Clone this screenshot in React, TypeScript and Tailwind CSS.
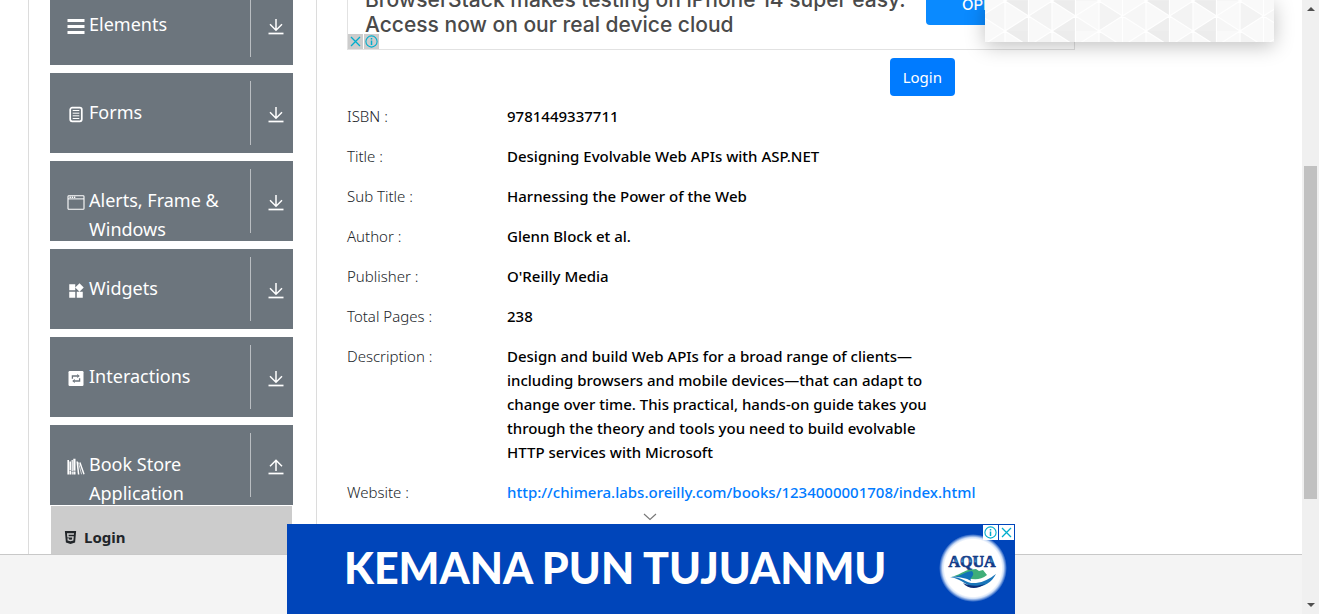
import React from "react";
import { MdWidgets } from "react-icons/md";
import { FaHtml5 } from "react-icons/fa";

function MenuIcon() {
  return (
    <svg viewBox="0 0 18 18" className="size-[18px]" fill="currentColor">
      <rect x="0.5" y="1" width="17" height="3" />
      <rect x="0.5" y="7" width="17" height="3" />
      <rect x="0.5" y="13" width="17" height="3" />
    </svg>
  );
}

function FormIcon() {
  return (
    <svg viewBox="0 0 18 18" className="size-[18px]" fill="none" stroke="currentColor">
      <rect x="3.2" y="1.7" width="11.6" height="13.6" rx="2" strokeWidth="1.7" />
      <path d="M5.7 4.5h6.6M5.7 7.2h6.6M5.7 9.8h6.6M5.7 12.5h6.6" strokeWidth="1" />
    </svg>
  );
}

function WindowIcon() {
  return (
    <svg viewBox="0 0 18 18" className="size-[18px]" fill="none" stroke="currentColor">
      <rect x="1" y="1.7" width="16" height="13.6" rx="0.8" strokeWidth="1.1" />
      <path d="M1 4.9h16" strokeWidth="1" />
      <path d="M2.5 3.3h6" strokeWidth="1.4" strokeDasharray="1.4 0.8" />
    </svg>
  );
}

function RepeatIcon() {
  return (
    <svg viewBox="0 0 18 18" className="size-[18px]" fill="none">
      <rect x="1.5" y="1" width="15" height="15" rx="1.2" fill="currentColor" />
      <path d="M5.4 8.8V6h5M12.6 8.2V11h-5" stroke="#6c757d" strokeWidth="1.3" />
      <path d="M10.2 3.9 12.8 6l-2.6 2.1zM7.8 8.9 5.2 11l2.6 2.1z" fill="#6c757d" />
    </svg>
  );
}

function BooksIcon() {
  return (
    <svg viewBox="0 0 18 18" className="size-[18px]" fill="none" stroke="currentColor">
      <path d="M1.2 2v14.5" strokeWidth="1.6" />
      <path d="M3.2 3.4v13.1" strokeWidth="1.6" strokeDasharray="9 0.6" />
      <path d="M5.2 2v14.5" strokeWidth="1.2" strokeDasharray="11 0.6" />
      <path d="M7.4 0.8v15.7" strokeWidth="2.2" strokeDasharray="12 0.6" />
      <path d="M10.2 3.5l1.4 13" strokeWidth="1.5" />
      <path d="M12.9 4.6 17 16.3" strokeWidth="1.4" />
      <path d="M11.4 4.4 14.6 16.3" strokeWidth="0.7" />
    </svg>
  );
}

function ArrowIcon({ up }: { up?: boolean }) {
  return (
    <svg viewBox="0 0 18 18" className="size-[18px]" fill="none" stroke="currentColor" strokeWidth="1.5">
      {up ? <path d="M9 13V2.2M3 8.2l6-6 6 6" /> : <path d="M9 1v11M3 6.2l6 6 6-6" />}
      <path d="M1.5 15.5h15" strokeWidth="1.7" />
    </svg>
  );
}

function CloseIcon() {
  return (
    <svg viewBox="0 0 15 15" className="size-[15px]" fill="none" stroke="#00aecd" strokeWidth="1.3">
      <path d="M3 3l9 9M12 3l-9 9" />
    </svg>
  );
}

function InfoIcon() {
  return (
    <svg viewBox="0 0 15 15" className="size-[15px]" fill="none" stroke="#00aecd">
      <circle cx="7.5" cy="7.5" r="5.6" strokeWidth="1.1" />
      <path d="M7.5 6.4v4.6M7.5 4v1.4" strokeWidth="1.5" />
    </svg>
  );
}

const menu = [
  { label: "Elements", icon: <MenuIcon /> },
  { label: "Forms", icon: <FormIcon /> },
  { label: "Alerts, Frame & Windows", icon: <WindowIcon /> },
  { label: "Widgets", icon: <MdWidgets className="size-[18px]" /> },
  { label: "Interactions", icon: <RepeatIcon /> },
  { label: "Book Store Application", icon: <BooksIcon />, open: true },
];

const details = [
  ["ISBN :", "9781449337711"],
  ["Title :", "Designing Evolvable Web APIs with ASP.NET"],
  ["Sub Title :", "Harnessing the Power of the Web"],
  ["Author :", "Glenn Block et al."],
  ["Publisher :", "O'Reilly Media"],
  ["Total Pages :", "238"],
  [
    "Description :",
    "Design and build Web APIs for a broad range of clients—including browsers and mobile devices—that can adapt to change over time. This practical, hands-on guide takes you through the theory and tools you need to build evolvable HTTP services with Microsoft",
  ],
];

function Sidebar() {
  return (
    <nav className="w-[289px] shrink-0 border-x border-[#dcdcdc] pr-[23px] pl-[21px]">
      <div className="-mt-[15px] flex flex-col gap-2">
        {menu.map((m) => (
          <div key={m.label}>
            <button
              type="button"
              className="flex h-20 w-full overflow-hidden bg-[#6c757d] py-2 pl-[17px] text-left text-white"
            >
              <span className="flex flex-1 items-start gap-1 pt-[17px]">
                <span className="pt-2">{m.icon}</span>
                <span className="w-[140px] text-[18px] leading-[29px]">{m.label}</span>
              </span>
              <span className="flex h-16 w-[43px] items-center justify-center border-l border-[#b9bdc1] pt-1 pl-2">
                <ArrowIcon up={m.open} />
              </span>
            </button>
            {m.open && (
              <a
                href="#login"
                className="mx-px mt-px flex h-[62px] items-center gap-[6px] bg-[#ccc] pl-3 text-[15px] font-bold text-[#212529]"
              >
                <FaHtml5 className="size-[15px]" />
                Login
              </a>
            )}
          </div>
        ))}
      </div>
    </nav>
  );
}

function TopAd() {
  return (
    <section className="-mt-10 flex h-[90px] w-[728px] flex-col justify-end border border-[#e2e2e2] bg-white">
      <div className="relative flex h-full justify-between pl-[17px]">
        <p className="pt-[26px] text-[21px] leading-[25px] font-medium whitespace-nowrap text-[#4a4a4a] font-['Inter',sans-serif]">
          BrowserStack makes testing on iPhone 14 super easy.
          <br />
          Access now on our real device cloud
        </p>
        <a
          href="#open"
          className="mt-5 mr-[30px] flex h-[44px] w-[118px] shrink-0 items-end rounded bg-[#0a8aff] pb-[9px] pl-9 text-[15px] font-medium text-white font-['Inter',sans-serif]"
        >
          OPEN
        </a>
        <div className="absolute bottom-0 left-0 flex gap-px">
          <button type="button" aria-label="Close ad" className="bg-[#ccc]">
            <CloseIcon />
          </button>
          <button type="button" aria-label="Ad choices" className="bg-[#ccc]">
            <InfoIcon />
          </button>
        </div>
      </div>
    </section>
  );
}

function Popup() {
  return (
    <aside className="absolute top-0 right-[28px] h-[42px] w-[289px] bg-[#f8f8f8] shadow-[0_4px_20px_rgba(0,0,0,0.25)]">
      <svg viewBox="0 0 289 42" className="h-full w-full">
        <defs>
          <pattern id="tri" width="141" height="30" patternUnits="userSpaceOnUse" patternTransform="translate(20 1)">
            <rect width="141" height="30" fill="#f9f9f9" />
            <path d="M0 0h23.5v15zM47 0h23.5v15z" fill="#ececec" />
            <path d="M0 30h23.5v-15zM47 30h23.5v-15z" fill="#eeeeee" />
            <path d="M23.5 15 47 0v30zM94 0v30l23.5-15z" fill="#f3f3f3" />
            <path d="M70.500 15 94 30H70.500zM141 0v30l-23.500-15z" fill="#f6f6f6" />
            <path
              d="M0 0v30M23.500 0v30M47 0v30M70.500 0v30M94 0v30M117.500 0v30M141 0v30M0 0l47 30L94 0l47 30M0 30 47 0l47 30 47-30"
              stroke="#fff"
              strokeWidth="1.2"
              fill="none"
            />
          </pattern>
        </defs>
        <rect width="289" height="42" fill="url(#tri)" />
      </svg>
    </aside>
  );
}

function AquaLogo() {
  return (
    <svg viewBox="0 0 72 72" className="size-[72px]">
      <defs>
        <radialGradient id="glow">
          <stop offset="0.84" stopColor="#fff" />
          <stop offset="0.9" stopColor="#cfdff7" />
          <stop offset="1" stopColor="#0045ba" />
        </radialGradient>
        <linearGradient id="letters" x1="0" y1="0" x2="0" y2="1">
          <stop offset="0.2" stopColor="#123a86" />
          <stop offset="0.5" stopColor="#3a9ad4" />
          <stop offset="0.6" stopColor="#123a86" />
        </linearGradient>
      </defs>
      <circle cx="36" cy="36" r="34" fill="url(#glow)" />
      <text
        x="35"
        y="35"
        textAnchor="middle"
        fontSize="16"
        fontWeight="700"
        fill="url(#letters)"
        stroke="#123a86"
        strokeWidth="0.7"
        className="font-['Liberation_Serif',serif]"
      >
        AQUA
      </text>
      <path d="M14 45c8-2 11-5 17-7l8-1 3 2 4-1 4 5c-6 5-13 5-19 3s-9-2-17-1z" fill="#3fae79" />
      <path d="M35 39c-8 1-10 5-20 6 9 0 14 1 19 4-2-4 5-5 1-10z" fill="#1173b8" />
      <path d="M13 45c13-1 15 7 26 6 8-1 13-4 20-9-4 8-12 13-20 13-10 0-13-8-26-10z" fill="#1a76ba" />
      <path d="M26 51c7 3 13 4 22 1-8 6-17 5-22-1z" fill="#0d2f78" />
    </svg>
  );
}

function BottomAd() {
  return (
    <aside className="absolute bottom-0 left-[287px] flex h-[90px] w-[728px] items-center bg-[#0045ba] pb-1 pl-[57px]">
      <p className="text-[43px] leading-none font-black whitespace-nowrap text-white font-['Lato',sans-serif]">
        KEMANA PUN TUJUANMU
      </p>
      <div className="absolute top-2 right-[6px]">
        <AquaLogo />
      </div>
      <div className="absolute top-px right-px flex gap-px">
        <button type="button" aria-label="Ad information" className="bg-white">
          <InfoIcon />
        </button>
        <button type="button" aria-label="Close ad" className="bg-white">
          <CloseIcon />
        </button>
      </div>
      <button type="button" aria-label="Collapse ad" className="absolute -top-[11px] left-[356px]">
        <svg viewBox="0 0 14 8" className="h-2 w-[14px]" fill="none" stroke="#777" strokeWidth="1.1">
          <path d="M1 1l6 5.500L13 1" />
        </svg>
      </button>
    </aside>
  );
}

function Scrollbar() {
  return (
    <div aria-hidden="true" className="flex w-[17px] shrink-0 flex-col items-center bg-[#f0f0f0] py-[7px]">
      <svg viewBox="0 0 8 4" className="h-1 w-2">
        <path d="M0 4 4 0l4 4z" fill="#505050" />
      </svg>
      <div className="flex w-full flex-1 flex-col px-[2px]">
        <div className="flex-[155]" />
        <div className="flex-[333] bg-[#c1c1c1]" />
        <div className="flex-[104]" />
      </div>
      <svg viewBox="0 0 8 4" className="h-1 w-2">
        <path d="M0 0l4 4 4-4z" fill="#505050" />
      </svg>
    </div>
  );
}

export default function App() {
  return (
    <div className="flex h-screen overflow-hidden bg-white font-['Noto_Sans',sans-serif] text-[#212529]">
      <div className="relative flex min-w-0 flex-1 flex-col">
        <main className="flex min-h-0 flex-1 overflow-hidden pl-7">
          <Sidebar />
          <div className="min-w-0 flex-1 pl-[30px]">
            <TopAd />
            <div className="flex w-[608px] justify-end pt-2">
              <button
                type="button"
                className="h-[38px] rounded bg-[#007bff] px-[13px] text-[15px] leading-6 text-white"
              >
                Login
              </button>
            </div>
            <dl className="mt-2 grid w-[608px] grid-cols-[160px_1fr] gap-y-4 text-[15px] leading-6">
              {details.map(([k, v]) => (
                <React.Fragment key={k}>
                  <dt className="font-light">{k}</dt>
                  <dd className="pr-5 font-medium text-black">{v}</dd>
                </React.Fragment>
              ))}
              <dt className="font-light">Website :</dt>
              <dd className="font-medium whitespace-nowrap">
                <a href="http://chimera.labs.oreilly.com/books/1234000001708/index.html" className="text-[#007bff]">
                  http://chimera.labs.oreilly.com/books/1234000001708/index.html
                </a>
              </dd>
            </dl>
          </div>
        </main>
        <footer className="h-[60px] shrink-0 border-t border-[#c8c8c8] bg-[#f4f4f4]" />
        <Popup />
        <BottomAd />
      </div>
      <Scrollbar />
    </div>
  );
}
